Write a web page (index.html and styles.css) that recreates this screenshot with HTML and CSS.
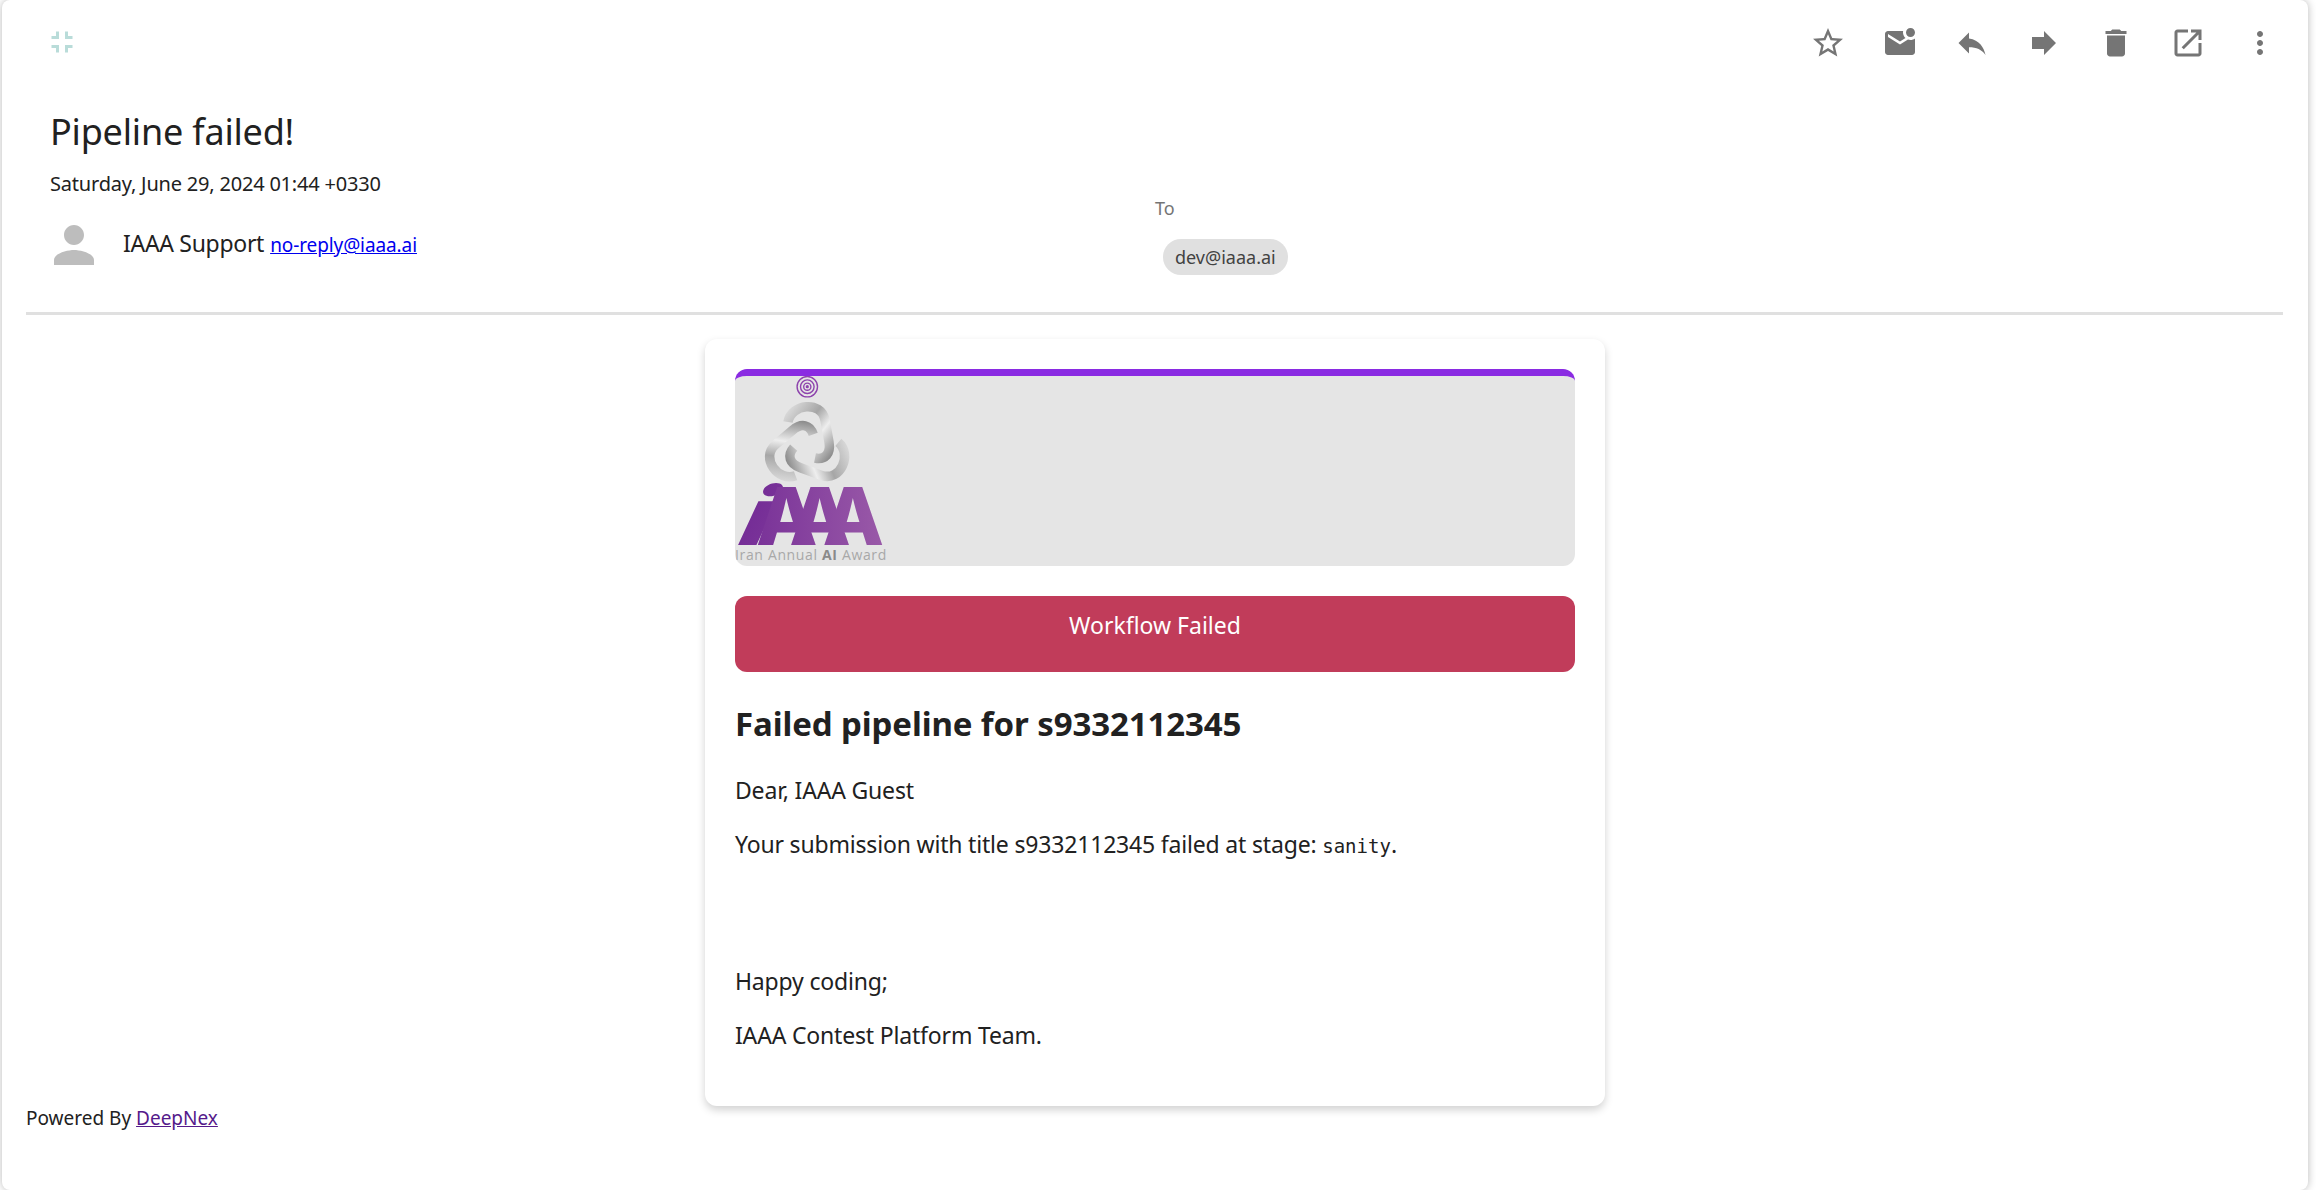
FILE: index.html
```html
<!DOCTYPE html>
<html lang="en">
<head>
<meta charset="utf-8">
<title>Pipeline failed!</title>
<link rel="stylesheet" href="styles.css">
</head>
<body>
<main class="panel">
  <header class="toolbar">
    <svg class="icon icon-exit" viewBox="0 0 24 24"><path d="M5 16h3v3h2v-5H5v2zm3-8H5v2h5V5H8v3zm6 11h2v-3h3v-2h-5v5zm2-11V5h-2v5h5V8h-3z"/></svg>
    <div class="actions">
      <span class="action"><svg class="icon" viewBox="0 0 24 24"><path d="M22 9.24l-7.19-.62L12 2 9.19 8.63 2 9.24l5.46 4.73L5.82 21 12 17.27 18.18 21l-1.63-7.03L22 9.24zM12 15.4l-3.76 2.27 1-4.28-3.32-2.88 4.38-.38L12 6.1l1.71 4.04 4.38.38-3.32 2.88 1 4.28L12 15.4z"/></svg></span>
      <span class="action"><svg class="icon" viewBox="0 0 24 24"><path d="M22 8.98V18c0 1.1-.9 2-2 2H4c-1.1 0-2-.9-2-2V6c0-1.1.9-2 2-2h10.1c-.06.32-.1.66-.1 1 0 1.48.65 2.79 1.67 3.71L12 11 4 6v2l8 5 5.3-3.32c.54.2 1.1.32 1.7.32 1.13 0 2.16-.39 3-1.02zM16 5c0 1.66 1.34 3 3 3s3-1.34 3-3-1.34-3-3-3-3 1.34-3 3z"/></svg></span>
      <span class="action"><svg class="icon" viewBox="0 0 24 24"><path d="M10 9V5l-7 7 7 7v-4.1c5 0 8.5 1.6 11 5.1-1-5-4-10-11-11z"/></svg></span>
      <span class="action"><svg class="icon" viewBox="0 0 24 24"><path d="M12 8V4l8 8-8 8v-4H4V8z"/></svg></span>
      <span class="action"><svg class="icon" viewBox="0 0 24 24"><path d="M6 19c0 1.1.9 2 2 2h8c1.1 0 2-.9 2-2V7H6v12zM19 4h-3.5l-1-1h-5l-1 1H5v2h14V4z"/></svg></span>
      <span class="action"><svg class="icon" viewBox="0 0 24 24"><path d="M19 19H5V5h7V3H5c-1.11 0-2 .9-2 2v14c0 1.1.89 2 2 2h14c1.1 0 2-.9 2-2v-7h-2v7zM14 3v2h3.59l-9.83 9.83 1.41 1.41L19 6.41V10h2V3h-7z"/></svg></span>
      <span class="action"><svg class="icon" viewBox="0 0 24 24"><path d="M12 8c1.1 0 2-.9 2-2s-.9-2-2-2-2 .9-2 2 .9 2 2 2zm0 2c-1.1 0-2 .9-2 2s.9 2 2 2 2-.9 2-2-.9-2-2-2zm0 6c-1.1 0-2 .9-2 2s.9 2 2 2 2-.9 2-2-.9-2-2-2z"/></svg></span>
    </div>
  </header>

  <section class="meta">
    <h1 class="subject">Pipeline failed!</h1>
    <div class="date">Saturday, June 29, 2024 01:44 +0330</div>
    <div class="people">
      <div class="sender">
        <svg class="avatar" viewBox="0 0 24 24"><path d="M12 12c2.21 0 4-1.79 4-4s-1.79-4-4-4-4 1.79-4 4 1.79 4 4 4zm0 2c-2.67 0-8 1.34-8 4v2h16v-2c0-2.66-5.33-4-8-4z"/></svg>
        <span class="sender-name">IAAA Support</span>
        <a class="sender-mail" href="#mail">no-reply@iaaa.ai</a>
      </div>
      <div class="recipients">
        <div class="to-label">To</div>
        <span class="chip">dev@iaaa.ai</span>
      </div>
    </div>
  </section>

  <hr class="divider">

  <article class="card">
    <div class="banner">
      <svg class="logo" viewBox="0 0 155 190" width="155" height="190">
        <defs>
          <linearGradient id="ribbon" x1="0" y1="0" x2="1" y2="1">
            <stop offset="0" stop-color="#dedede"/>
            <stop offset=".4" stop-color="#a6a6a6"/>
            <stop offset=".65" stop-color="#eeeeee"/>
            <stop offset="1" stop-color="#8c8c8c"/>
          </linearGradient>
          <linearGradient id="purple" gradientUnits="userSpaceOnUse" x1="0" y1="0" x2="150" y2="0">
            <stop offset="0" stop-color="#742c96"/>
            <stop offset="1" stop-color="#9a5aa8"/>
          </linearGradient>
          <path id="lobe" d="M53 46C56 28 86 24 90 44L94 66C96 78 90 84 80 82"/>
        </defs>
        <g class="badge">
          <circle cx="72.3" cy="10.7" r="10.2"/>
          <circle cx="72.3" cy="10.7" r="6.8"/>
          <circle cx="72.3" cy="10.7" r="3.6"/>
          <circle class="badge-dot" cx="72.3" cy="10.7" r="1.6"/>
        </g>
        <g class="knot">
          <use href="#lobe"/>
          <use href="#lobe" transform="rotate(120 72.3 70.7)"/>
          <use href="#lobe" transform="rotate(240 72.3 70.7)"/>
        </g>
        <text class="logo-i" transform="translate(-3 169) skewX(-25) scale(1.35 1)">i</text>
        <text class="logo-a" x="21" y="169" textLength="128" lengthAdjust="spacing">AAA</text>
        <text class="logo-tag" x="0" y="184">Iran Annual <tspan class="logo-tag-ai">AI</tspan> Award</text>
      </svg>
    </div>
    <div class="alert">Workflow Failed</div>
    <h2 class="headline">Failed pipeline for s9332112345</h2>
    <p class="line">Dear, IAAA Guest</p>
    <p class="line">Your submission with title s9332112345 failed at stage: <code class="stage">sanity</code>.</p>
    <p class="line line-gap">Happy coding;</p>
    <p class="line">IAAA Contest Platform Team.</p>
  </article>

  <footer class="footer">Powered By <a class="footer-link" href="#deepnex">DeepNex</a></footer>
</main>
</body>
</html>
```

FILE: styles.css
```css
* { box-sizing: border-box; }

html, body { margin: 0; height: 100%; background: #fff; }

body {
  font-family: "Noto Sans", "Open Sans", sans-serif;
  color: #212121;
  overflow: hidden;
}

.panel {
  height: 1190px;
  margin: 0 8px 0 2px;
  background: #fff;
  border-radius: 8px;
  box-shadow: 0 0 8px rgba(0, 0, 0, .28);
}

.toolbar {
  display: flex;
  justify-content: space-between;
  align-items: flex-start;
  height: 100px;
  padding: 25px 12px 0 42px;
}

.icon { display: block; width: 36px; height: 36px; fill: #757575; }
.icon-exit { fill: #b9dcd9; margin-top: -1px; }

.actions { display: flex; }
.action { display: flex; justify-content: center; width: 72px; }

.meta { padding: 0 24px 0 48px; }

.subject {
  margin: 0;
  height: 64px;
  font-size: 36px;
  line-height: 64px;
  font-weight: 400;
  letter-spacing: -.2px;
}

.date { font-size: 20px; line-height: 28px; margin-top: 6px; letter-spacing: -.2px; }

.people {
  display: grid;
  grid-template-columns: 1105px 1fr;
  height: 114px;
}

.sender { display: flex; align-items: baseline; height: 60px; margin-top: 17px; margin-left: -6px; position: relative; padding-left: 79px; padding-top: 12px; }

.avatar { position: absolute; left: 0; top: 0; width: 60px; height: 60px; fill: #bdbdbd; }

.sender-name { font-size: 23px; line-height: 32px; margin-right: 6px; letter-spacing: -.3px; }
.sender-mail { font-size: 19px; letter-spacing: -.1px; }

.to-label { font-size: 18px; line-height: 24px; color: #757575; margin-top: -2px; }

.chip {
  display: inline-flex;
  align-items: center;
  height: 36px;
  margin: 19px 0 0 8px;
  padding: 0 12px;
  border-radius: 18px;
  background: #e0e0e0;
  color: #424242;
  font-size: 18px;
}

.divider {
  height: 3px;
  margin: 0 25px 0 24px;
  border: 0;
  background: #e0e0e0;
}

.card {
  width: 900px;
  height: 767px;
  margin: 24px auto 0;
  padding: 30px;
  background: #fff;
  border-radius: 12px;
  box-shadow: 0 4px 8px rgba(0, 0, 0, .18);
}

.banner {
  height: 197px;
  background: #e5e5e5;
  border-top: 7px solid #8a2be2;
  border-radius: 12px;
  overflow: hidden;
}

.logo { display: block; }
.badge circle { fill: none; stroke: #8e44ad; stroke-width: 1.4; }
.badge .badge-dot { fill: #8e44ad; stroke: none; }
.knot { fill: none; stroke: url(#ribbon); stroke-width: 9.5; }
.logo-i, .logo-a { font-family: Inter, "Liberation Sans", sans-serif; font-weight: 800; font-size: 80px; fill: url(#purple); }
.logo-tag { font-family: "Open Sans", sans-serif; font-size: 14px; letter-spacing: .65px; fill: #a8a8a8; }
.logo-tag-ai { font-weight: 700; fill: #8a8a8a; }

.alert {
  height: 76px;
  margin-top: 30px;
  padding-top: 12px;
  border-radius: 12px;
  background: #c13c5a;
  color: #fff;
  font-size: 23px;
  line-height: 34px;
  text-align: center;
}

.headline {
  margin: 28px 0 0;
  font-size: 33px;
  line-height: 48px;
  font-weight: 700;
  letter-spacing: -.1px;
}

.line { margin: 0; font-size: 23px; line-height: 54px; letter-spacing: -.18px; }
.headline + .line { margin-top: 15px; }
.line-gap { margin-top: 81px; }
.stage { font-family: "DejaVu Sans Mono", "Liberation Mono", monospace; font-size: 19px; letter-spacing: 0; }

.footer { margin: -2px 0 0 24px; font-size: 19px; line-height: 28px; }
.footer-link { color: #551a8b; }
```
